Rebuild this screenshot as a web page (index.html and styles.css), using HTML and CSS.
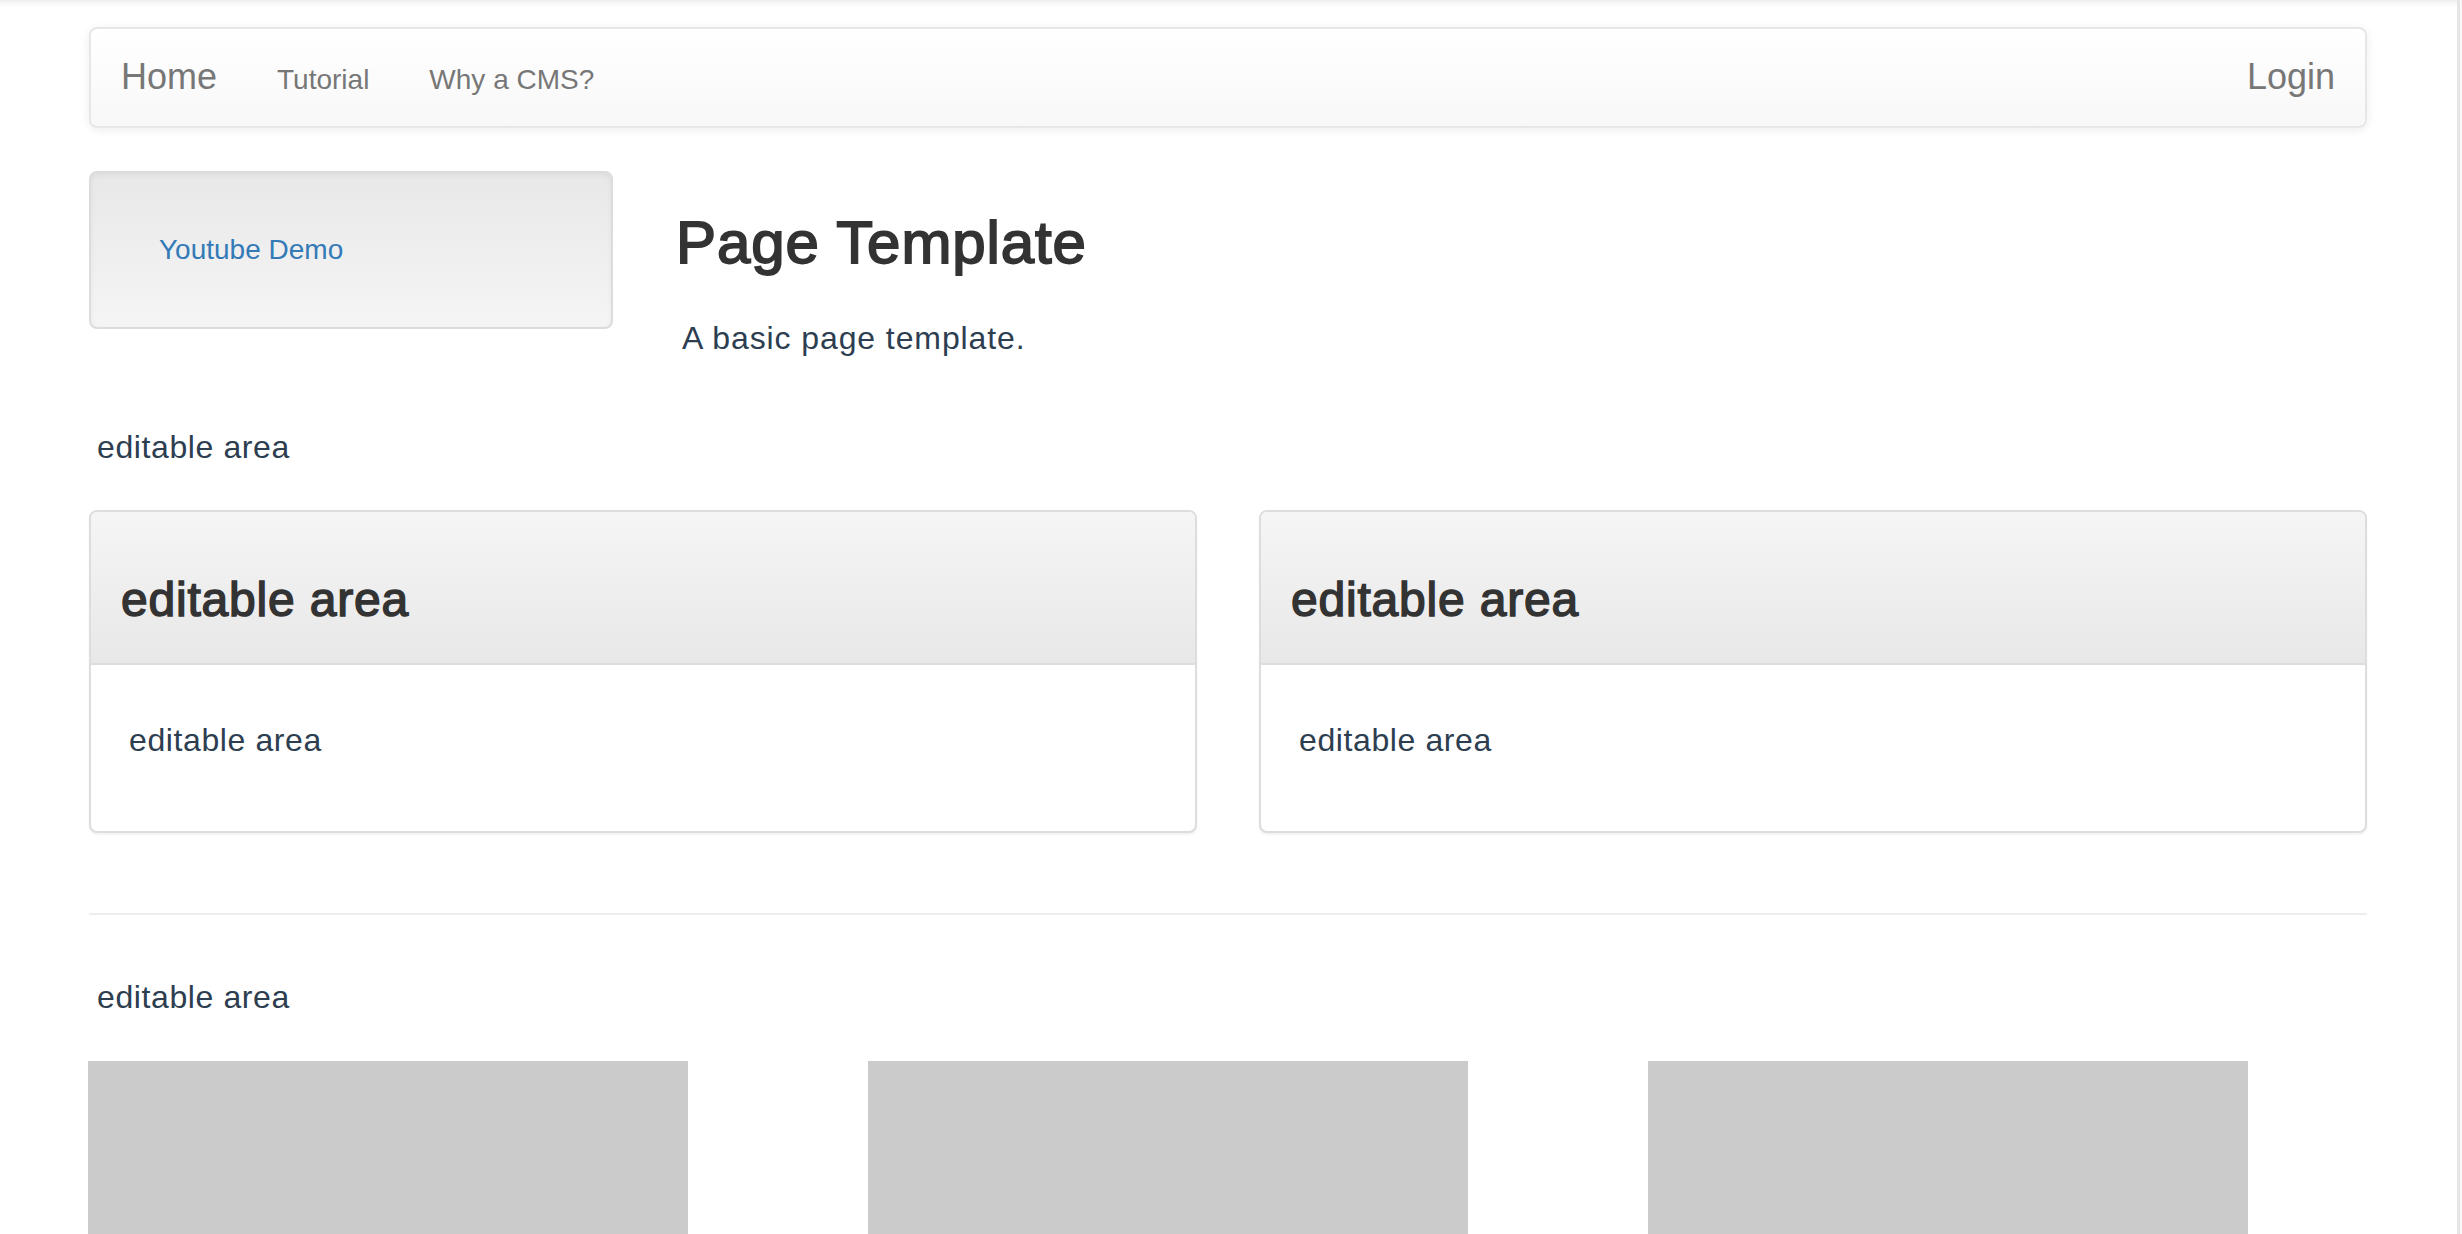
FILE: index.html
```html
<!DOCTYPE html>
<html lang="en">
<head>
<meta charset="utf-8">
<title>Page Template</title>
<link rel="stylesheet" href="styles.css">
</head>
<body>
<div class="page">
  <div class="main">
    <div class="container">
      <nav class="navbar">
        <a class="brand" href="#">Home</a>
        <a class="nav-link" href="#">Tutorial</a>
        <a class="nav-link" href="#">Why a CMS?</a>
        <a class="login" href="#">Login</a>
      </nav>

      <div class="hero">
        <div class="well">
          <a class="well-link" href="#">Youtube Demo</a>
        </div>
        <div class="intro">
          <h2 class="title">Page Template</h2>
          <p class="lead">A basic page template.</p>
        </div>
      </div>

      <p class="editable first">editable area</p>

      <div class="panels">
        <div class="panel">
          <div class="panel-heading">editable area</div>
          <div class="panel-body">editable area</div>
        </div>
        <div class="panel">
          <div class="panel-heading">editable area</div>
          <div class="panel-body">editable area</div>
        </div>
      </div>

      <hr class="divider">

      <p class="editable second">editable area</p>

      <div class="thumbs">
        <div class="thumb"></div>
        <div class="thumb"></div>
        <div class="thumb"></div>
      </div>
    </div>
  </div>
  <div class="scrollstrip"></div>
</div>
</body>
</html>
```

FILE: styles.css
```css
html, body {
  margin: 0;
  padding: 0;
  height: 100%;
  overflow: hidden;
  background: #fff;
}

body {
  font-family: "Liberation Sans", Arial, Helvetica, sans-serif;
  color: #2c3e50;
}

a {
  text-decoration: none;
}

.page {
  display: flex;
  height: 1234px;
}

.main {
  flex: 1;
  background: linear-gradient(to bottom, #ececec 0, #f7f7f7 3px, #fff 7px) no-repeat;
}

.scrollstrip {
  width: 2px;
  border-left: 3px solid #e6e6e6;
  background: #f8f8f8;
}

.container {
  padding: 0 90px 0 89px;
}

/* NAVBAR */
.navbar {
  box-sizing: border-box;
  margin-top: 27px;
  height: 101px;
  padding-top: 30px;
  display: flex;
  align-items: baseline;
  border: 2px solid #e7e7e7;
  border-radius: 8px;
  background: linear-gradient(to bottom, #fff 0, #f8f8f8 100%);
  box-shadow: inset 0 2px 0 rgba(255,255,255,.15), 0 2px 10px rgba(0,0,0,.075);
}

.brand {
  font-size: 36px;
  line-height: 1;
  color: #777;
  padding: 0 30px;
}

.nav-link {
  font-size: 28px;
  line-height: 1;
  color: #777;
  padding: 0 30px;
}

.login {
  margin-left: auto;
  font-size: 36px;
  line-height: 1;
  color: #777;
  padding: 0 30px;
}

/* HERO */
.hero {
  display: flex;
  align-items: flex-start;
  margin-top: 43px;
}

.well {
  box-sizing: border-box;
  width: 524px;
  height: 158px;
  padding: 63px 0 0 68px;
  border: 2px solid #dcdcdc;
  border-radius: 8px;
  background: linear-gradient(to bottom, #e8e8e8 0, #f5f5f5 100%);
  box-shadow: inset 0 2px 6px rgba(0,0,0,.05), 0 2px 0 rgba(255,255,255,.1);
}

.well-link {
  font-size: 28px;
  line-height: 1;
  color: #337ab7;
}

.intro {
  margin-left: 63px;
  padding-top: 42px;
}

.title {
  margin: 0;
  font-size: 60px;
  line-height: 1;
  font-weight: normal;
  letter-spacing: 0.9px;
  -webkit-text-stroke: 1.8px #333;
  color: #333;
}

.lead {
  margin: 49px 0 0 6px;
  font-size: 32px;
  line-height: 1;
  letter-spacing: 0.9px;
  color: #2c3e50;
}

/* EDITABLE TEXT */
.editable {
  margin: 0;
  padding-left: 8px;
  font-size: 32px;
  line-height: 1;
  letter-spacing: 0.6px;
  color: #2c3e50;
}

.editable.first {
  margin-top: 77px;
}

.editable.second {
  margin-top: 66px;
}

/* PANELS */
.panels {
  display: flex;
  gap: 62px;
  margin-top: 47px;
}

.panel {
  flex: 1;
  border: 2px solid #ddd;
  border-radius: 8px;
  background: #fff;
  box-shadow: 0 2px 2px rgba(0,0,0,.05);
  overflow: hidden;
}

.panel-heading {
  padding: 64px 29px 39px 30px;
  font-size: 48px;
  line-height: 1;
  font-weight: normal;
  letter-spacing: 0.8px;
  -webkit-text-stroke: 1.5px #333;
  color: #333;
  background: linear-gradient(to bottom, #f5f5f5 0, #e8e8e8 100%);
  border-bottom: 2px solid #ddd;
}

.panel-body {
  padding: 59px 38px 75px;
  font-size: 32px;
  line-height: 1;
  letter-spacing: 0.6px;
  color: #2c3e50;
}

/* DIVIDER */
.divider {
  margin: 80px 0 0;
  border: 0;
  border-top: 2px solid #eee;
  height: 0;
}

/* THUMBNAILS */
.thumbs {
  display: flex;
  gap: 180px;
  margin-top: 48px;
  margin-left: -1px;
}

.thumb {
  width: 600px;
  height: 174px;
  background: #cbcbcb;
}
```
